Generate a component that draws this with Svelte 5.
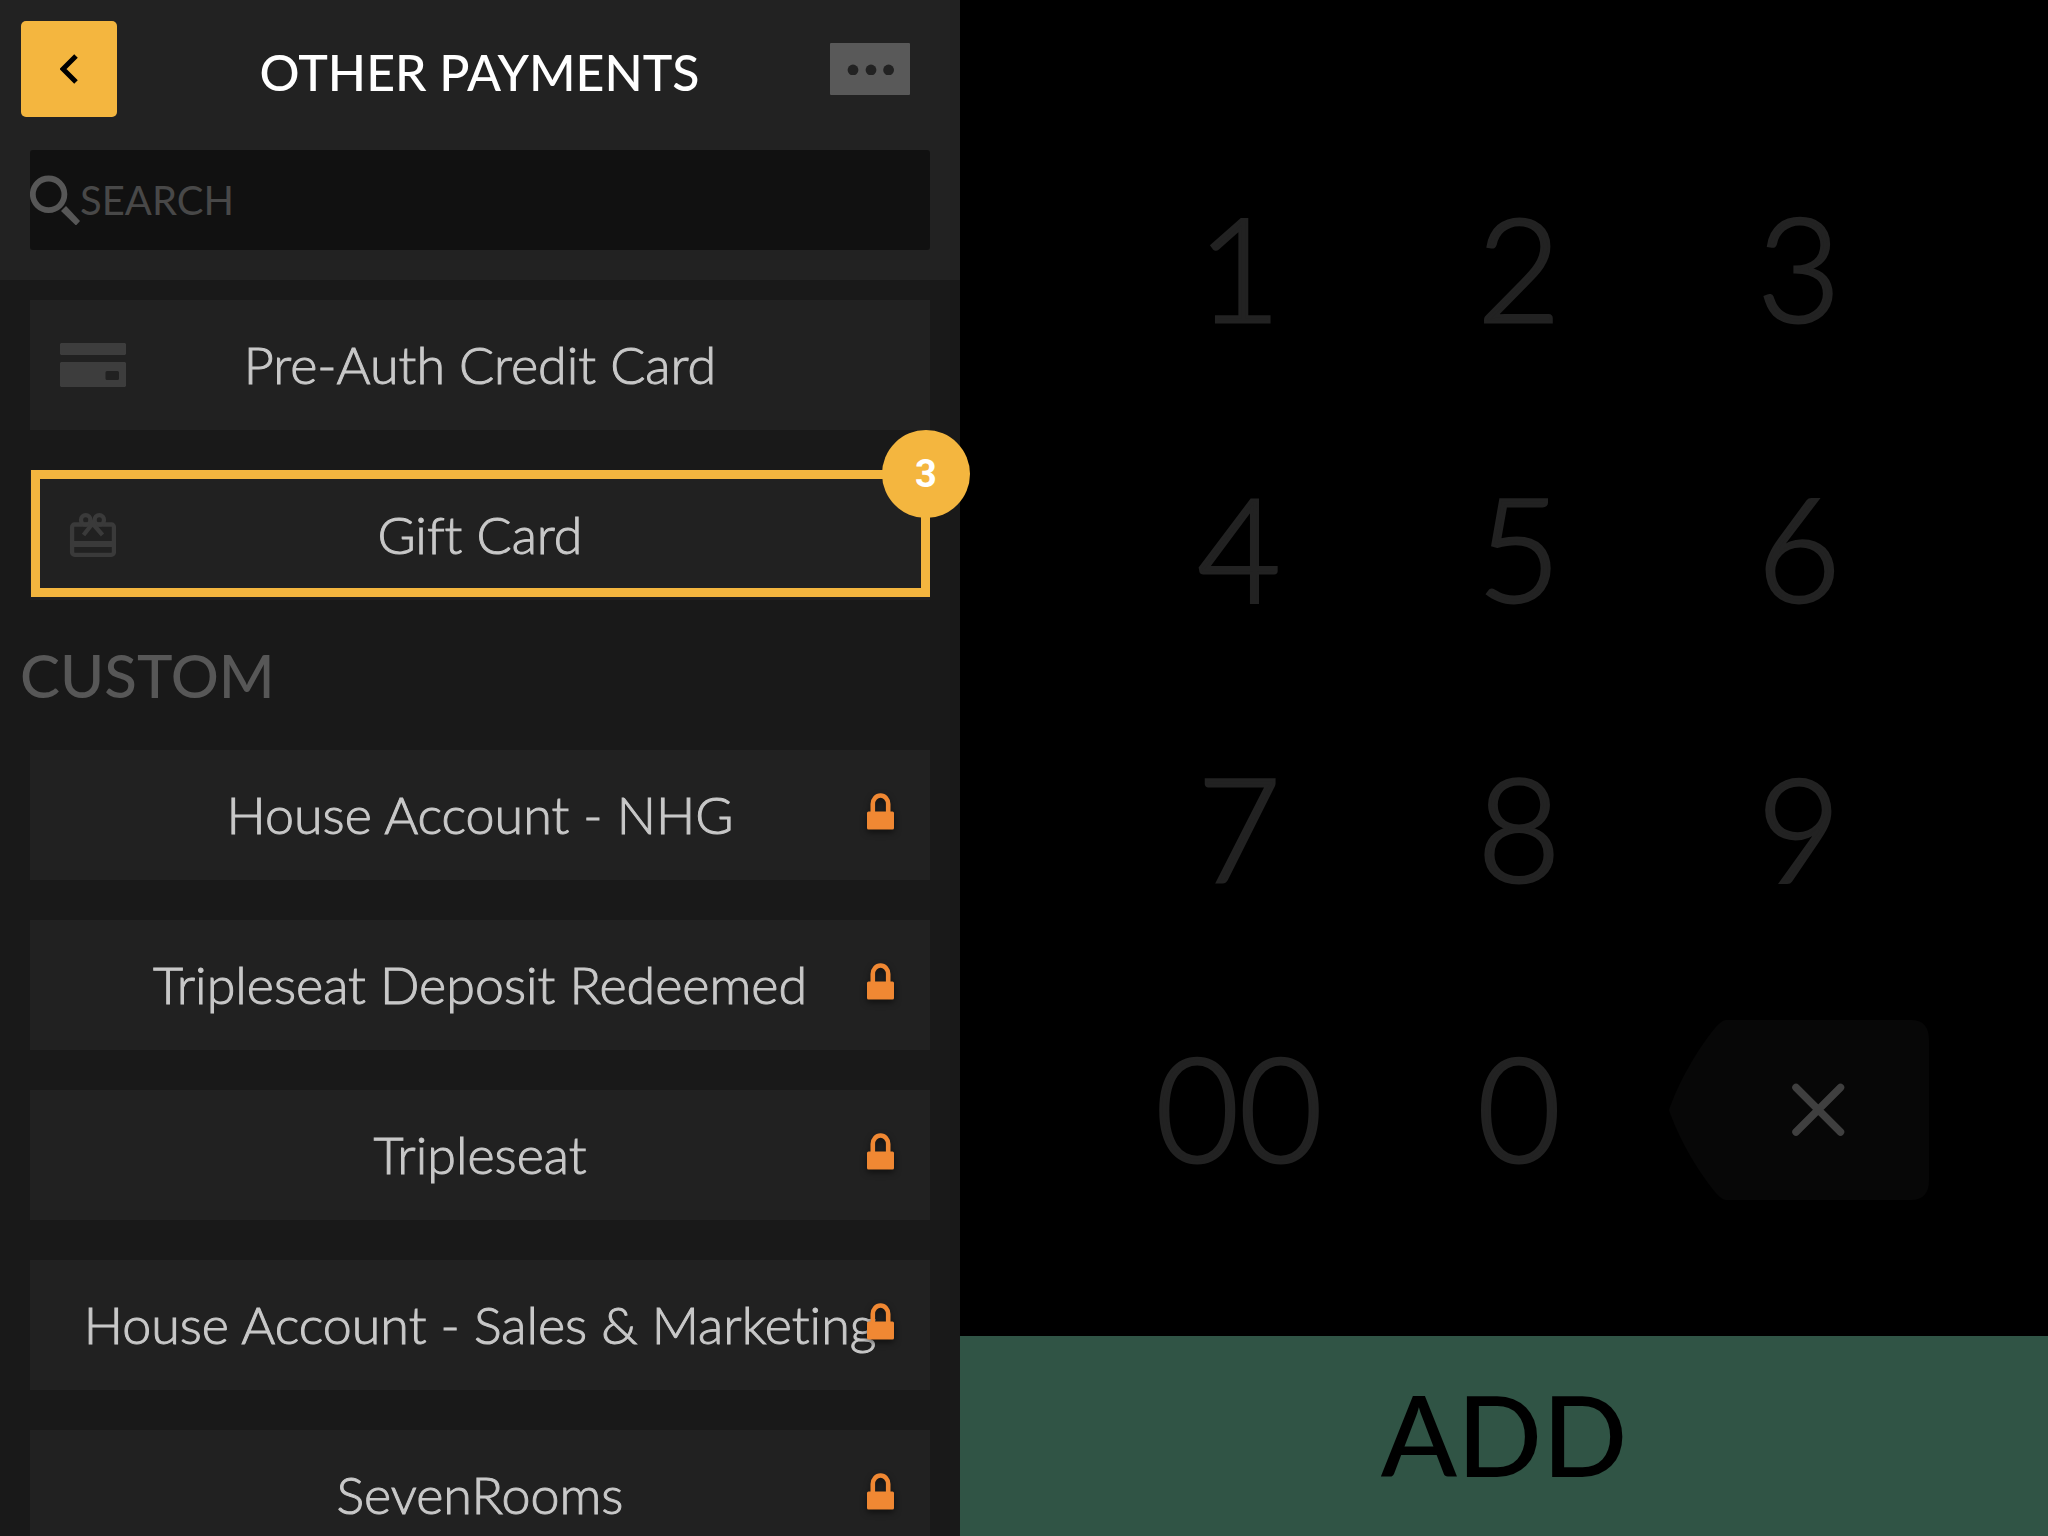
<script lang="ts">
  interface Payment {
    name: string;
    icon?: 'card' | 'gift';
    step?: number;
  }

  const payments: Payment[] = [
    { name: 'Pre-Auth Credit Card', icon: 'card' },
    { name: 'Gift Card', icon: 'gift', step: 3 },
  ];

  const customPayments: Payment[] = [
    { name: 'House Account - NHG' },
    { name: 'Tripleseat Deposit Redeemed' },
    { name: 'Tripleseat' },
    { name: 'House Account - Sales & Marketing' },
    { name: 'SevenRooms' },
  ];

  const keys = ['1', '2', '3', '4', '5', '6', '7', '8', '9', '00', '0'];

  let search = $state('');
  let amount = $state('');

  function matches(payment: Payment) {
    return payment.name.toLowerCase().includes(search.toLowerCase());
  }
</script>

<div class="screen">
  <section class="payments">
    <header>
      <div class="title-bar">
        <button class="back" aria-label="Back">
          <svg width="18" height="30" viewBox="0 0 18 30">
            <path d="M16 2 3 15l13 13" fill="none" stroke="#000" stroke-width="5" />
          </svg>
        </button>
        <h1>OTHER PAYMENTS</h1>
        <button class="more" aria-label="More options">
          <svg width="48" height="12" viewBox="0 0 48 12">
            <circle cx="7" cy="7" r="5.400" />
            <circle cx="25" cy="7" r="5.400" />
            <circle cx="42.600" cy="7" r="5.400" />
          </svg>
        </button>
      </div>
      <label class="search">
        <svg width="50" height="50" viewBox="0 0 50 50">
          <circle cx="18.600" cy="19.300" r="15.800" fill="none" stroke="#575757" stroke-width="5.800" />
          <path d="M36 31 50 46 46 50.500 31 36z" fill="#575757" />
        </svg>
        <input type="text" placeholder="SEARCH" aria-label="Search" bind:value={search} />
      </label>
    </header>

    <div class="list">
      {#each payments.filter(matches) as payment}
        <button class="row">
          {#if payment.icon === 'card'}
            <svg class="icon" width="66" height="44" viewBox="0 0 66 44">
              <path
                d="M1 0h64l1 1v10l-1 1H1l-1-1V1zM1 19h64l1 1v23l-1 1H1l-1-1V20zM47 28q-1.500 0-1.500 1.500v6q0 1.500 1.500 1.500h10.500q1.500 0 1.500-1.500v-6q0-1.500-1.500-1.500z"
                fill="#3d3d3d"
                fill-rule="evenodd"
              />
            </svg>
          {:else if payment.icon === 'gift'}
            <svg class="icon" width="66" height="44" viewBox="0 0 66 44">
              <g fill="none" stroke="#3a3a3a" stroke-width="4.300">
                <rect x="12.100" y="11.500" width="41.800" height="30.300" rx="2.500" />
                <path d="M12 30.900h42" stroke-width="6" />
                <circle cx="25.700" cy="6.900" r="4.700" />
                <circle cx="39.300" cy="6.900" r="4.700" />
                <path d="M35 7.500 23.500 22M30 7.500 42.500 22" />
              </g>
            </svg>
          {/if}
          <span class="name">{payment.name}</span>
          {#if payment.step}
            <span class="highlight"></span>
            <span class="badge">{payment.step}</span>
          {/if}
        </button>
      {/each}

      <h2>CUSTOM</h2>

      {#each customPayments.filter(matches) as payment}
        <button class="row">
          <span class="name">{payment.name}</span>
          <svg class="lock" width="27" height="37" viewBox="0 0 27 37">
            <path d="M5.800 20V11a7.700 8.500 0 0 1 15.400 0v9" fill="none" stroke="#f08833" stroke-width="4.600" />
            <rect y="18.500" width="27" height="18" rx="1.500" fill="#f08833" />
          </svg>
        </button>
      {/each}
    </div>
  </section>

  <section class="entry">
    <div class="keypad">
      {#each keys as key}
        <button class="key digit" onclick={() => (amount += key)}>{key}</button>
      {/each}
      <button class="key" aria-label="Delete" onclick={() => (amount = amount.slice(0, -1))}>
        <svg width="260" height="180" viewBox="0 0 260 180">
          <path
            d="M57 0H242Q260 0 260 20V160Q260 180 242 180H57Q53 180 46 172C28 150 9 117 0 90C9 63 28 30 46 8Q53 0 57 0Z"
            fill="#070707"
          />
          <path d="M127 67.500 171.500 112M171.500 67.500 127 112" stroke="#3f3f3f" stroke-width="7.500" stroke-linecap="round" />
        </svg>
      </button>
    </div>
    <button class="add">ADD</button>
  </section>
</div>

<style>
  :global(body) {
    margin: 0;
    background: #000;
  }

  button {
    border: 0;
    padding: 0;
    font: inherit;
    color: inherit;
    cursor: pointer;
  }

  svg {
    display: block;
  }

  .screen {
    display: grid;
    grid-template-columns: 15fr 17fr;
    height: 100vh;
    overflow: hidden;
    font-family: Lato, 'Open Sans', sans-serif;
    font-variant-ligatures: none;
  }

  /* sits above the keypad so the step badge can cross the panel edge */
  .payments {
    position: relative;
    z-index: 1;
    display: flex;
    flex-direction: column;
    min-width: 0;
    min-height: 0;
    background: #191919;
  }

  header {
    background: #222;
    padding: 21px 30px 30px;
  }

  .title-bar {
    display: grid;
    grid-template-columns: 96px 1fr 80px;
    align-items: center;
    margin: 0 20px 33px -9px;
  }

  .back {
    display: grid;
    place-items: center;
    height: 96px;
    border-radius: 5px;
    background: #f4b63f;
  }

  h1 {
    margin: 0;
    padding: 6px 0 0 12px;
    font-size: 50px;
    font-weight: 500;
    line-height: 60px;
    text-align: center;
    color: #fff;
  }

  .more {
    display: grid;
    place-items: center;
    height: 52px;
    border-radius: 1px;
    background: #595959;
    fill: #222;
  }

  .search {
    display: flex;
    align-items: center;
    height: 100px;
    border-radius: 3px;
    background: #111;
  }

  .search input {
    flex: 1;
    min-width: 0;
    border: 0;
    padding: 0;
    outline: 0;
    background: none;
    color: #c8c8c8;
    font-family: inherit;
    font-size: 40px;
  }

  .search input::placeholder {
    color: #484848;
    opacity: 1;
  }

  .list {
    flex: 1;
    display: flex;
    flex-direction: column;
    gap: 40px;
    min-height: 0;
    padding: 20px 30px;
  }

  .row {
    position: relative;
    display: grid;
    align-items: center;
    justify-items: center;
    flex: none;
    height: 130px;
    background: #212121;
    color: #c8c8c8;
    font-size: 52px;
    font-weight: 300;
    line-height: 60px;
    white-space: nowrap;
  }

  .row > * {
    grid-area: 1 / 1;
  }

  .name {
    padding-bottom: 2px;
    -webkit-text-stroke: 1px currentColor;
  }

  .icon {
    justify-self: start;
    margin-left: 30px;
  }

  .lock {
    justify-self: end;
    margin: 0 36px 8px 0;
    filter: drop-shadow(0 3px 3px rgba(0, 0, 0, 0.5));
    z-index: 1;
  }

  .highlight {
    position: absolute;
    inset: 0 0 3px 1px;
    border: 9px solid #f4b63f;
  }

  .badge {
    position: absolute;
    top: -40px;
    right: -40px;
    width: 88px;
    height: 88px;
    border-radius: 50%;
    background: #f4b63f;
    color: #fff;
    font-family: Roboto, 'Liberation Sans', sans-serif;
    font-size: 38px;
    font-weight: 700;
    line-height: 88px;
    text-align: center;
    z-index: 2;
  }

  h2 {
    margin: 0 -10px;
    font-size: 60px;
    font-weight: 500;
    line-height: 70px;
    color: #575757;
  }

  .entry {
    display: flex;
    flex-direction: column;
    min-width: 0;
    background: #000;
  }

  .keypad {
    flex: 1;
    display: grid;
    grid-template-columns: repeat(3, 280px);
    grid-auto-rows: 280px;
    place-content: center;
    padding: 44px 0 0 30px;
  }

  .key {
    display: grid;
    place-items: center;
    background: none;
    color: #222;
    font-size: 144px;
    font-weight: 300;
    line-height: 1;
  }

  .digit {
    padding-bottom: 6px;
    -webkit-text-stroke: 3px currentColor;
  }

  .add {
    height: 200px;
    padding-bottom: 4px;
    background: #305445;
    color: #000;
    font-size: 112px;
    font-weight: 500;
    line-height: 1;
  }
</style>
